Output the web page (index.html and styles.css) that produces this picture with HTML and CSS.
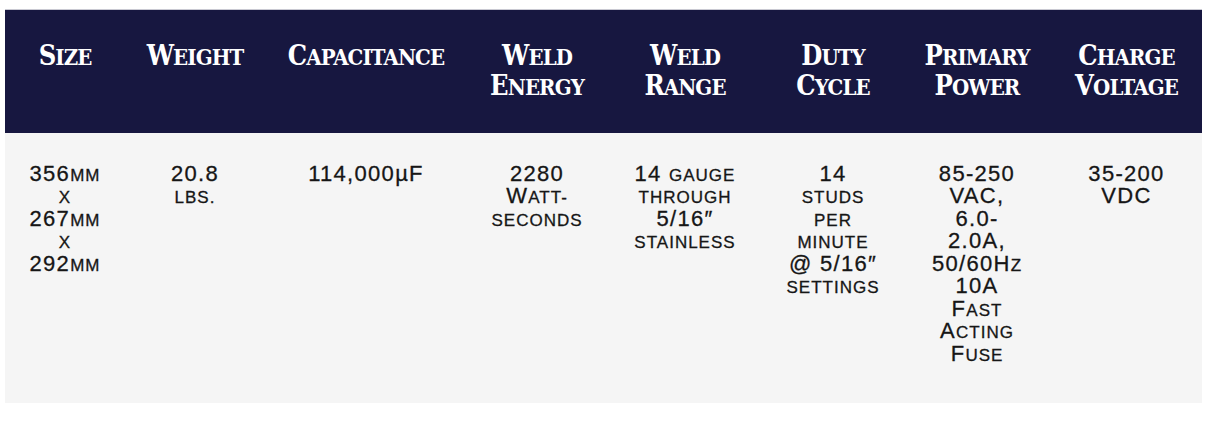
FILE: index.html
```html
<!DOCTYPE html>
<html>
<head>
<meta charset="utf-8">
<link rel="stylesheet" href="styles.css">
</head>
<body>
<div class="wrap">
<table class="specs">
<colgroup>
<col class="w1"><col class="w2"><col class="w3"><col class="w4"><col class="w5"><col class="w6"><col class="w7"><col class="w8">
</colgroup>
<thead>
<tr>
<th><span class="c">S</span>ize</th>
<th><span class="c">W</span>eight</th>
<th><span class="c">C</span>apacitance</th>
<th><span class="c">W</span>eld<br><span class="c">E</span>nergy</th>
<th><span class="c">W</span>eld<br><span class="c">R</span>ange</th>
<th><span class="c">D</span>uty<br><span class="c">C</span>ycle</th>
<th><span class="c">P</span>rimary<br><span class="c">P</span>ower</th>
<th><span class="c">C</span>harge<br><span class="c">V</span>oltage</th>
</tr>
</thead>
<tbody>
<tr>
<td>356<span class="sc">mm</span><br><span class="sc">x</span><br>267<span class="sc">mm</span><br><span class="sc">x</span><br>292<span class="sc">mm</span></td>
<td>20.8<br><span class="sc">lbs.</span></td>
<td>114,000<span class="mu">µ</span>F</td>
<td>2280<br>W<span class="sc">att-</span><br><span class="sc">seconds</span></td>
<td>14 <span class="sc">gauge</span><br><span class="sc">through</span><br>5/16″<br><span class="sc">stainless</span></td>
<td>14<br><span class="sc">studs</span><br><span class="sc">per</span><br><span class="sc">minute</span><br>@ 5/16″<br><span class="sc">settings</span></td>
<td>85-250<br>VAC,<br>6.0-<br>2.0A,<br>50/60H<span class="sc">z</span><br>10A<br>F<span class="sc">ast</span><br>A<span class="sc">cting</span><br>F<span class="sc">use</span></td>
<td>35-200<br>VDC</td>
</tr>
</tbody>
</table>
</div>
</body>
</html>
```

FILE: styles.css
```css
html, body {
  margin: 0;
  padding: 0;
  background: #ffffff;
}

.wrap {
  padding: 9px 12px 0 5px;
}

.specs {
  width: 1197px;
  border-collapse: collapse;
  table-layout: fixed;
  border-top: 1px solid #c9c9d2;
}

.w1 { width: 120px; }
.w2 { width: 140px; }
.w3 { width: 202px; }
.w4 { width: 140px; }
.w5 { width: 156px; }
.w6 { width: 140px; }
.w7 { width: 148px; }
.w8 { width: 151px; }

.specs th {
  background: #171740;
  color: #ffffff;
  font-family: "DejaVu Serif", serif;
  font-stretch: condensed;
  font-weight: 700;
  font-size: 22px;
  line-height: 29px;
  letter-spacing: -0.9px;
  text-transform: uppercase;
  text-align: center;
  vertical-align: top;
  padding: 32px 0 0 0;
  height: 123px;
  box-sizing: border-box;
}

.specs th .c {
  font-size: 27px;
  line-height: 1;
}

.specs td {
  background: #f5f5f5;
  color: #161616;
  font-family: "Liberation Sans", sans-serif;
  font-weight: 400;
  font-size: 22px;
  line-height: 22.5px;
  text-transform: uppercase;
  text-align: center;
  vertical-align: top;
  padding: 30px 0 38px 0;
  letter-spacing: 1.3px;
  -webkit-text-stroke: 0.3px #161616;
}

.specs td .sc {
  font-size: 17px;
  line-height: 1;
  letter-spacing: 1px;
}

.specs td .mu {
  text-transform: none;
}
```
